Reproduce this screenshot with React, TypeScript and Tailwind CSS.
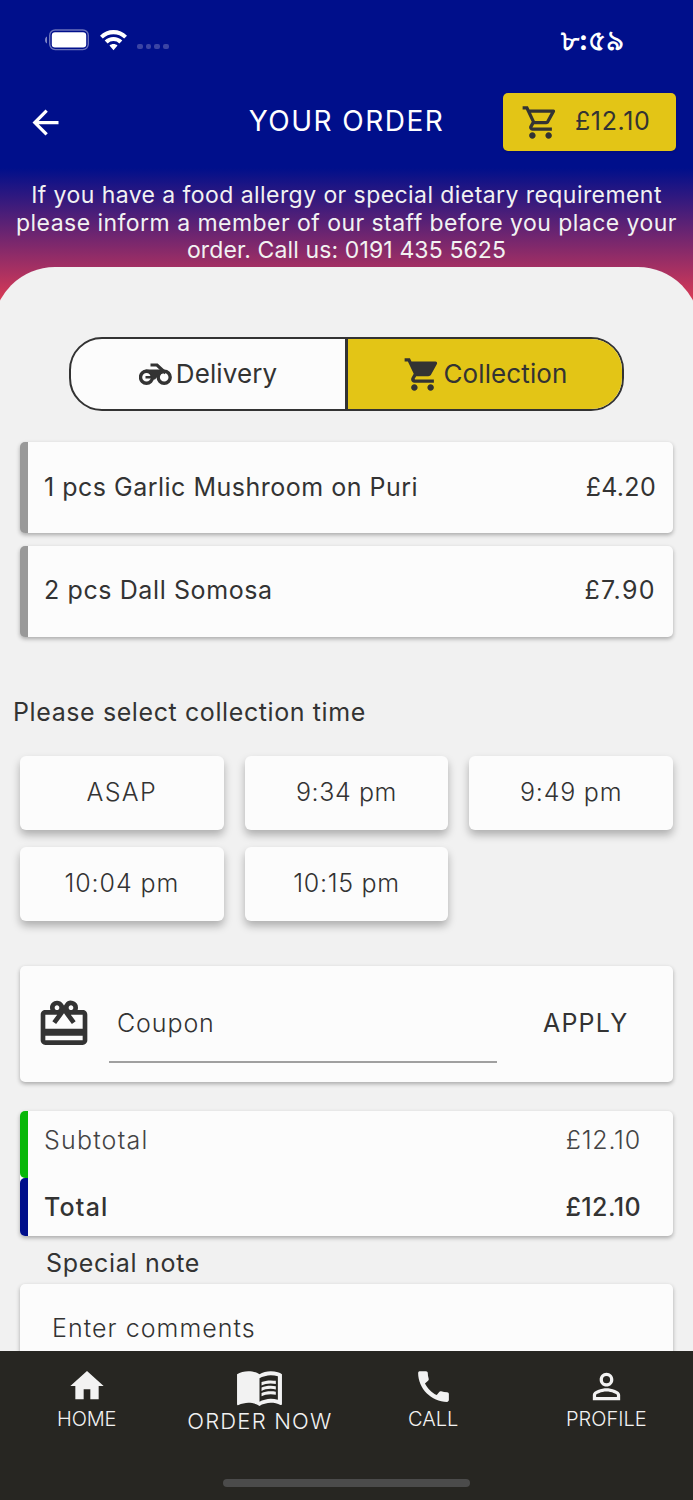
import React, { useState } from 'react';
import {
	MdArrowBack,
	MdCall,
	MdHome,
	MdMenuBook,
	MdOutlineShoppingCart,
	MdPersonOutline,
	MdRedeem,
	MdShoppingCart,
} from 'react-icons/md';

const items = [
	{ name: '1 pcs Garlic Mushroom on Puri', price: '£4.20', nameTracking: 'tracking-[0.5px]', priceTracking: 'tracking-[0.3px]' },
	{ name: '2 pcs Dall Somosa', price: '£7.90', nameTracking: 'tracking-[0.6px]', priceTracking: 'tracking-[1.4px]' },
];

const times = [
	{ label: 'ASAP', tracking: 'tracking-[1.4px]' },
	{ label: '9:34 pm', tracking: 'tracking-[0.6px]' },
	{ label: '9:49 pm', tracking: 'tracking-[0.8px]' },
	{ label: '10:04 pm', tracking: 'tracking-[0.9px]' },
	{ label: '10:15 pm', tracking: 'tracking-[0.7px]' },
];

/**
 * The phone status bar.
 */
const StatusBar = () => (
	<div className="flex h-[80px] shrink-0 items-center justify-between pr-[69px] pl-[45px] text-white">
		<div className="flex items-center">
			<svg width="44" height="22" viewBox="0 0 44 22" fill="none">
				<path d="M2 7.500v7C.8 14 0 12.600 0 11s.8-3 2-3.500Z" fill="#7c83c4" />
				<rect x="4.700" y="1" width="38.600" height="19.600" rx="5.500" stroke="#6a72ba" strokeWidth="1.400" />
				<rect x="6.800" y="3.200" width="34.400" height="15.200" rx="3.200" fill="white" />
			</svg>
			<svg className="ml-[11px]" width="27" height="21" viewBox="0 0 27 21" fill="white">
				<path d="M13.500 0C8.300 0 3.600 2 0 5.700l2.800 2.900a15.200 15.200 0 0 1 21.400 0L27 5.700C23.400 2 18.700 0 13.500 0Z" />
				<path d="M13.500 7C10.100 7 7.100 8.300 4.700 10.600l2.900 2.900a8.500 8.500 0 0 1 11.800 0l2.900-2.900C19.900 8.300 16.900 7 13.500 7Z" />
				<path d="M13.500 14c-1.500 0-2.900.5-4 1.500l4 4.800 4-4.800c-1.100-1-2.500-1.500-4-1.500Z" />
			</svg>
			<div className="mt-[13px] ml-[10px] flex gap-[3px]">
				{[0, 1, 2, 3].map((dot) => (
					<span key={dot} className="size-[5.7px] rounded-[2px] bg-[#3b44a4]" />
				))}
			</div>
		</div>
		<span className="text-[28px] font-bold">৮:৫৯</span>
	</div>
);

const MotorcycleIcon = () => (
	<svg width="33" height="22" viewBox="0 0 33 22" fill="none" stroke="#333333">
		<circle cx="7.500" cy="14.300" r="6" strokeWidth="3.400" />
		<circle cx="25.200" cy="14.300" r="6" strokeWidth="3.400" />
		<path d="M6.500 14.300h6" strokeWidth="2.600" />
		<path d="M6.500 6.400h16.500l2.500 3.400-5.500 2-4 4.700h-3L10.500 9 6.500 8.200Z" fill="#333333" stroke="none" />
		<path d="M11.500 2H18l8.500 8" strokeWidth="3.200" />
	</svg>
);

const TimeCard = ({ label, tracking }: { label: string; tracking: string }) => (
	<button
		type="button"
		className="h-[74px] rounded-[6px] bg-[#fcfcfc] text-[25px] font-light shadow-[0_5px_9px_rgba(0,0,0,0.28)]"
	>
		<span className={tracking}>{label}</span>
	</button>
);

const App = () => {
	const [coupon, setCoupon] = useState('');

	return (
		<div className="flex h-[1500px] w-[693px] flex-col overflow-hidden bg-[linear-gradient(180deg,#000f8b_0,#000f8b_168px,#dc3b55_302px)] font-['Inter','Noto_Sans',sans-serif] text-[#333333]">
			<StatusBar />

			{/* Title row */}
			<header className="mt-[13px] grid h-[58px] shrink-0 grid-cols-[1fr_auto_1fr] items-center px-[17px] text-white">
				<MdArrowBack className="ml-[9px] size-[39px]" />
				<h1 className="mb-[3px] text-[28px] tracking-[1.500px]">YOUR ORDER</h1>
				<button
					type="button"
					className="flex h-[58px] w-[173px] items-center justify-self-end rounded-[5px] bg-[#e3c516] pl-[18px] text-[#333333] shadow"
				>
					<MdOutlineShoppingCart className="size-[39px]" />
					<span className="ml-[15px] text-[25px] tracking-[0.6px]">£12.10</span>
				</button>
			</header>

			<p className="mt-[31px] h-[85px] shrink-0 text-center text-[23px] leading-[27.5px] whitespace-nowrap text-[#f2f2f2]">
				<span className="block tracking-[0.43px]">If you have a food allergy or special dietary requirement</span>
				<span className="block tracking-[0.46px]">please inform a member of our staff before you place your</span>
				<span className="block tracking-[0.12px]">order. Call us: 0191 435 5625</span>
			</p>

			{/* Order sheet */}
			<main className="-mx-[7px] flex min-h-0 flex-1 flex-col overflow-hidden rounded-t-[62px] bg-[#f1f1f1] px-[27px] pt-[70px]">
				<div className="mx-[49px] flex h-[74px] shrink-0 overflow-hidden rounded-[33px] border-2 border-[#333333] bg-[#fcfcfc] text-[26px]">
					<button type="button" className="flex flex-1 items-center justify-center gap-[4px] border-r-[3px] border-[#333333]">
						<MotorcycleIcon />
						<span className="-mt-[2px] tracking-[0.1px]">Delivery</span>
					</button>
					<button type="button" className="flex flex-1 items-center justify-center gap-[2px] bg-[#e3c516]">
						<MdShoppingCart className="size-[39px]" />
						<span className="-mt-[2px] tracking-[0.1px]">Collection</span>
					</button>
				</div>

				<div className="mt-[31px] flex flex-col gap-[12.500px]">
					{items.map((item) => (
						<div
							key={item.name}
							className="flex h-[91px] items-center justify-between rounded-[5px] border-l-[8px] border-[#999999] bg-[#fcfcfc] pr-[17px] pl-[16px] text-[25px] shadow-[0_2px_4px_rgba(0,0,0,0.3)]"
						>
							<span className={item.nameTracking}>{item.name}</span>
							<span className={item.priceTracking}>{item.price}</span>
						</div>
					))}
				</div>

				<h2 className="mt-[59px] -ml-[7px] text-[25px] leading-[32px] tracking-[0.6px]">Please select collection time</h2>

				<div className="mt-[28.500px] grid grid-cols-3 gap-x-[21px] gap-y-[16.500px]">
					{times.map((time) => (
						<TimeCard key={time.label} label={time.label} tracking={time.tracking} />
					))}
				</div>

				<div className="mt-[45px] flex h-[116px] shrink-0 items-center rounded-[5px] bg-[#fcfcfc] shadow-[0_2px_4px_rgba(0,0,0,0.3)]">
					<MdRedeem className="ml-[16px] size-[56px]" />
					<input
						aria-label="Coupon"
						placeholder="Coupon"
						className="ml-[17px] h-[79px] w-[388px] border-b-2 border-[#a0a0a0] pl-[8px] text-[25px] font-light tracking-[0.9px] placeholder:text-[#333333]"
						value={coupon}
						onChange={(e) => setCoupon(e.target.value)}
					/>
					<button type="button" className="ml-[46px] text-[25px] tracking-[1.200px]">
						APPLY
					</button>
				</div>

				<div className="mt-[29.500px] shrink-0 rounded-[5px] bg-[#fcfcfc] text-[25px] shadow-[0_2px_4px_rgba(0,0,0,0.3)]">
					<div className="flex h-[66.500px] justify-between rounded-[5px] border-l-[8px] border-[#08b708] pt-[13px] pr-[32px] pl-[16px] leading-[32px] font-light text-[#444444]">
						<span className="tracking-[1.200px]">Subtotal</span>
						<span className="tracking-[0.8px]">£12.10</span>
					</div>
					<div className="flex h-[58px] justify-between rounded-[5px] border-l-[8px] border-[#000f8b] pt-[13px] pr-[32px] pl-[16px] leading-[32px] font-medium">
						<span className="tracking-[1.200px]">Total</span>
						<span className="tracking-[0.4px]">£12.10</span>
					</div>
				</div>

				<h2 className="mt-[11px] ml-[26px] shrink-0 text-[25px] leading-[32px] tracking-[0.7px]">Special note</h2>
				<textarea
					aria-label="Special note"
					placeholder="Enter comments"
					className="mt-[5px] h-[140px] shrink-0 resize-none rounded-[5px] bg-[#fcfcfc] px-[32px] pt-[28px] text-[25px] leading-[32px] font-light tracking-[1.050px] shadow-[0_2px_4px_rgba(0,0,0,0.3)] placeholder:text-[#333333]"
				/>
			</main>

			{/* Bottom navigation */}
			<nav className="flex h-[149px] shrink-0 flex-col bg-[#272622] text-[#f2f2f2]">
				<div className="grid h-[128px] grid-cols-4 text-center text-[20px] leading-[24px] font-light">
					<a className="flex flex-col items-center pt-[15px]">
						<MdHome className="size-[40px]" />
						<span className="mt-[1px] tracking-[-0.2px]">HOME</span>
					</a>
					<a className="flex flex-col items-center pt-[11px] text-[22px]">
						<MdMenuBook className="size-[49px]" />
						<span className="-mt-[2px] tracking-[1.200px] whitespace-nowrap">ORDER NOW</span>
					</a>
					<a className="flex flex-col items-center pt-[15px]">
						<MdCall className="size-[41px]" />
						<span>CALL</span>
					</a>
					<a className="flex flex-col items-center pt-[15px]">
						<MdPersonOutline className="size-[41px]" />
						<span>PROFILE</span>
					</a>
				</div>
				<div className="mx-auto h-[8px] w-[247px] rounded-full bg-[#4b4b4b]" />
			</nav>
		</div>
	);
};

export default App;
